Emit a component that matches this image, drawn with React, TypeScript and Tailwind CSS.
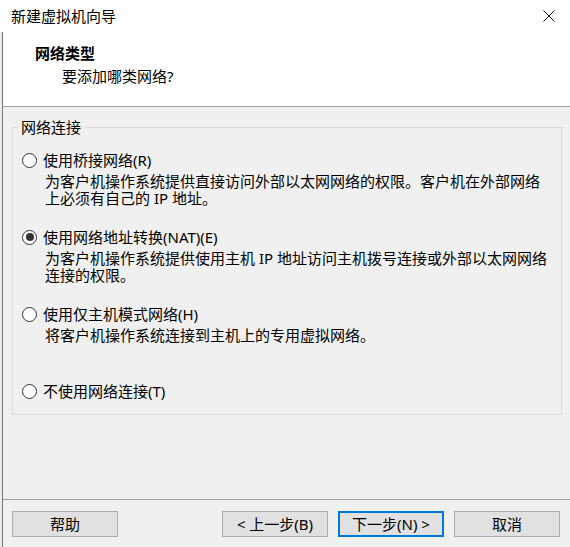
import React from 'react';

const options = [
  {
    label: '使用桥接网络(R)',
    lines: ['为客户机操作系统提供直接访问外部以太网网络的权限。客户机在外部网络', '上必须有自己的 IP 地址。'],
    checked: false,
  },
  {
    label: '使用网络地址转换(NAT)(E)',
    lines: ['为客户机操作系统提供使用主机 IP 地址访问主机拨号连接或外部以太网网络', '连接的权限。'],
    checked: true,
  },
  {
    label: '使用仅主机模式网络(H)',
    lines: ['将客户机操作系统连接到主机上的专用虚拟网络。'],
    checked: false,
  },
];

const Radio: React.FC<{ checked: boolean }> = ({ checked }) => (
  <span className="w-[15px] h-[15px] rounded-full border border-[#333333] bg-white flex items-center justify-center shrink-0">
    {checked && <span className="w-[8px] h-[8px] rounded-full bg-[#333333]" />}
  </span>
);

const Button: React.FC<{ label: string; primary?: boolean }> = ({ label, primary }) => (
  <div
    className={
      primary
        ? 'w-[106px] h-[26px] bg-[#e1e1e1] border-2 border-[#0078d7] flex items-center justify-center'
        : 'w-[106px] h-[26px] bg-[#e1e1e1] border border-[#adadad] flex items-center justify-center'
    }
  >
    <span className="leading-[20px]">{label}</span>
  </div>
);

export default function App() {
  return (
    <div className="relative w-[570px] h-[547px] overflow-hidden bg-[#f0f0f0] text-black text-[15px] font-['Noto_Sans','Noto_Sans_CJK_SC',sans-serif] flex flex-col">
      {/* title bar */}
      <div className="h-[32px] bg-white flex items-center pl-[11px] pr-[15px] shrink-0">
        <span className="leading-[20px]">新建虚拟机向导</span>
        <svg className="ml-auto" width="12" height="12" viewBox="0 0 12 12">
          <path d="M0.5 0.5 L11.5 11.5 M11.5 0.5 L0.5 11.5" stroke="#111" strokeWidth="1" fill="none" />
        </svg>
      </div>

      {/* header */}
      <div className="h-[75px] bg-white border-b border-[#a0a0a0] pt-[11px] pl-[35px] shrink-0">
        <div className="font-bold leading-[20px]">网络类型</div>
        <div className="leading-[20px] mt-[3px] pl-[27px]">要添加哪类网络?</div>
      </div>

      {/* body */}
      <div className="flex-1 pl-[12px] pr-[8px]">
        <fieldset className="mt-[10px] border border-[#dcdcdc] p-0">
          <legend className="ml-[5px] px-[3px] leading-[20px]">网络连接</legend>
          <div className="pl-[9px] pt-[13px] pb-[13px]">
            {options.map((o, i) => (
              <div key={i} className="h-[77px]">
                <div className="flex items-center h-[20px]">
                  <Radio checked={o.checked} />
                  <span className="ml-[6px] leading-[20px] whitespace-nowrap">{o.label}</span>
                </div>
                <div className="pl-[23px] mt-[3px] leading-[17px] whitespace-nowrap">
                  {o.lines.map((l, j) => (
                    <div key={j}>{l}</div>
                  ))}
                </div>
              </div>
            ))}
            <div className="flex items-center h-[20px]">
              <Radio checked={false} />
              <span className="ml-[6px] leading-[20px]">不使用网络连接(T)</span>
            </div>
          </div>
        </fieldset>
      </div>

      {/* footer */}
      <div className="h-[48px] border-t border-[#a0a0a0] pt-[11px] pl-[12px] pr-[10px] flex items-start shrink-0">
        <Button label="帮助" />
        <div className="ml-auto flex gap-[10px]">
          <Button label="< 上一步(B)" />
          <Button label="下一步(N) >" primary />
          <Button label="取消" />
        </div>
      </div>

      {/* edge of the window behind */}
      <div className="absolute left-0 top-[32px] bottom-0 w-[3px] bg-[#ececec] border-r border-[#7a7a7a]" />
    </div>
  );
}
